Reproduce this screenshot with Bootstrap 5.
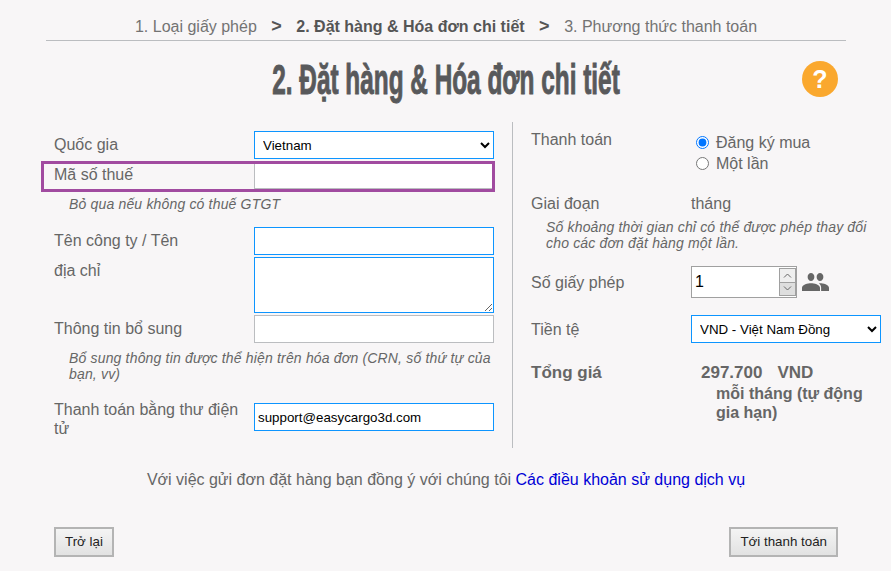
<!DOCTYPE html>
<html lang="vi">
<head>
<meta charset="utf-8">
<title>Đặt hàng</title>
<link href="https://cdn.jsdelivr.net/npm/bootstrap@5.3.0/dist/css/bootstrap.min.css" rel="stylesheet">
<style>
html,body{height:100%;}
body{background:#f8f6f7;font-family:"Liberation Sans",Arial,sans-serif;color:#666;font-size:16px;overflow:hidden;}
.shell{width:800px;margin-left:46px;height:571px;}
.stepbar{height:41px;border-bottom:1px solid #bbbdc0;padding-top:17px;line-height:19px;font-size:16px;color:#737373;justify-content:center;}
.stepbar b{color:#555;}
.sep{font-weight:700;font-size:18px;line-height:18px;color:#555;margin:0 14.5px;}
.headline{height:78px;position:relative;}
.headtext{font-size:42px;font-weight:700;color:#58595b;line-height:78px;white-space:nowrap;display:block;transform:scaleX(.58);transform-origin:center;text-align:center;-webkit-text-stroke:1px #58595b;}
.helpdot{position:absolute;left:756px;top:20px;width:36px;height:36px;border-radius:50%;background:#faa82e;color:#fff;font-weight:700;font-size:25px;line-height:36px;text-align:center;}
.panes{height:326px;margin-top:3px;}
.leftpane{width:467px;border-right:1px solid #bbbdc0;padding:9px 18px 0 8px;flex:none;}
.rightpane{padding:0 0 0 18px;flex:1;}
.frow{display:flex;}
.flabel{width:200px;flex:none;line-height:20px;padding-top:4px;}
.ffield{width:240px;height:28px;border:1px solid #0d95ff;background:#fff;border-radius:0;padding:0 3px;font-size:13.333px;color:#000;font-family:inherit;outline:none;display:block;}
select.ffield{padding:0 4px;}
.plain{border-color:#bbbdc0;}
.taxbox{border:3px solid #a14ba0;margin:2px -1px 0 -13px;height:31px;padding-left:10px;}
.taxbox .flabel{padding-top:0;line-height:21px;}
.taxbox .ffield{height:25px;border-color:#bbbdc0;border-right:0;border-top:0;width:238px;}
.hint{font-style:italic;font-size:14px;line-height:16px;color:#666;padding-left:15px;letter-spacing:.17px;}
.gap4{margin-top:4px;}
.gap15{margin-top:15px;}
.gap2{margin-top:2px;}
.gap7{margin-top:7px;}
.gap17{margin-top:17px;}
.gap18{margin-top:18px;}
.gap20{margin-top:20px;}
.gap5{margin-top:5px;}
.ratext{resize:vertical;height:56px;}
.mailrow .flabel{padding-top:0;line-height:19px;}
.mailrow .ffield{margin-top:3px;}
.rrow{display:flex;}
.rlabel{width:160px;flex:none;line-height:20px;}
.rvalue{line-height:20px;}
.firstrow{padding-top:8px;}
.radbox{margin-top:2px;padding-left:5px;}
.radline{line-height:21px;display:flex;align-items:center;}
.radline input{width:13px;height:13px;margin:0 7px 0 0;flex:none;}
.numcap{padding-top:2px;}
.numwrap{width:106px;height:32px;border:1px solid #a0a0a0;background:#fff;position:relative;flex:none;}
.numwrap input{border:0;width:86px;height:30px;padding:0 3px;font-size:16px;color:#000;outline:none;background:transparent;font-family:inherit;}
.spin{position:absolute;right:0;top:1px;width:17px;height:28px;display:flex;flex-direction:column;border:1px solid #a0a0a0;}
.spin span{flex:1;background:#efefef;display:flex;align-items:center;justify-content:center;}
.spin span+span{border-top:1px solid #a0a0a0;background:#dedede;}
.peopleicon{margin-left:5px;}
.curr{width:190px;height:28px;border:1px solid #0d95ff;background:#fff;font-size:13.333px;color:#000;padding:0 4px;font-family:inherit;outline:none;}
.tiencap{padding-top:5px;}
.total{font-size:17px;font-weight:700;color:#666;line-height:20px;}
.totalval{padding-left:10px;}
.vnd{margin-left:15px;}
.permonth{font-size:16px;line-height:19px;padding-left:15px;margin-top:1px;width:175px;}
.terms{text-align:center;line-height:20px;margin-top:22px;color:#666;}
.terms a{color:#0000d6;text-decoration:none;}
.foot{margin:37px 8px 0;}
.navbtn{border:2px solid #b4b4b4;border-radius:0;background:linear-gradient(#f4f4f4,#e2e2e2);color:#222;font-size:13.333px;height:30px;padding:0 9px;line-height:26px;}
</style>
</head>
<body>
<div class="shell">
  <div class="stepbar d-flex">
    <span>1. Loại giấy phép</span><span class="sep">&gt;</span><b>2. Đặt hàng &amp; Hóa đơn chi tiết</b><span class="sep">&gt;</span><span>3. Phương thức thanh toán</span>
  </div>
  <div class="headline">
    <span class="headtext">2. Đặt hàng &amp; Hóa đơn chi tiết</span>
    <div class="helpdot">?</div>
  </div>
  <div class="panes d-flex">
    <div class="leftpane">
      <div class="frow"><div class="flabel">Quốc gia</div><select class="ffield"><option>Vietnam</option></select></div>
      <div class="frow taxbox"><div class="flabel">Mã số thuế</div><input class="ffield" type="text"></div>
      <div class="hint gap4">Bỏ qua nếu không có thuế GTGT</div>
      <div class="frow gap15"><div class="flabel">Tên công ty / Tên</div><input class="ffield" type="text"></div>
      <div class="frow gap2"><div class="flabel">địa chỉ</div><textarea class="ffield ratext"></textarea></div>
      <div class="frow gap2"><div class="flabel">Thông tin bổ sung</div><input class="ffield plain" type="text"></div>
      <div class="hint gap7">Bổ sung thông tin được thể hiện trên hóa đơn (CRN, số thứ tự của bạn, vv)</div>
      <div class="frow gap18 mailrow"><div class="flabel">Thanh toán bằng thư điện tử</div><input class="ffield" type="text" value="support@easycargo3d.com"></div>
    </div>
    <div class="rightpane">
      <div class="rrow firstrow"><div class="rlabel">Thanh toán</div>
        <div class="radbox">
          <label class="radline"><input type="radio" name="pay" checked>Đăng ký mua</label>
          <label class="radline"><input type="radio" name="pay">Một lần</label>
        </div>
      </div>
      <div class="rrow gap20"><div class="rlabel">Giai đoạn</div><div class="rvalue">tháng</div></div>
      <div class="hint gap5">Số khoảng thời gian chỉ có thể được phép thay đổi cho các đơn đặt hàng một lần.</div>
      <div class="rrow align-items-center gap15"><div class="rlabel numcap">Số giấy phép</div>
        <div class="numwrap"><input type="text" value="1"><div class="spin"><span><svg width="9" height="5" viewBox="0 0 9 5"><path d="M1 4.500 4.500 1 8 4.500" fill="none" stroke="#666"/></svg></span><span><svg width="9" height="5" viewBox="0 0 9 5"><path d="M1 .5 4.500 4 8 .5" fill="none" stroke="#666"/></svg></span></div></div>
        <svg class="peopleicon" width="27" height="18" viewBox="0 0 24 16"><path fill="#666" d="M16 7c1.700 0 3-1.500 3-3.500S17.700 0 16 0s-3 1.500-3 3.500S14.300 7 16 7zM8 7c1.700 0 3-1.500 3-3.500S9.700 0 8 0 5 1.500 5 3.500 6.300 7 8 7zm0 2c-2.700 0-8 1.300-8 4v3h16v-3c0-2.700-5.300-4-8-4zm8 0h-1c1.300 1 2 2.300 2 4v3h7v-3c0-2.700-5.300-4-8-4z"/></svg>
      </div>
      <div class="rrow gap17"><div class="rlabel tiencap">Tiền tệ</div><select class="curr"><option>VND - Việt Nam Đồng</option></select></div>
      <div class="rrow gap20"><div class="rlabel total">Tổng giá</div><div class="total totalval">297.700<span class="vnd">VND</span><div class="permonth">mỗi tháng (tự động gia hạn)</div></div></div>
    </div>
  </div>
  <div class="terms">Với việc gửi đơn đặt hàng bạn đồng ý với chúng tôi <a href="#">Các điều khoản sử dụng dịch vụ</a></div>
  <div class="foot d-flex justify-content-between">
    <button class="navbtn" type="button">Trở lại</button>
    <button class="navbtn" type="button">Tới thanh toán</button>
  </div>
</div>
<script src="https://cdn.jsdelivr.net/npm/bootstrap@5.3.0/dist/js/bootstrap.bundle.min.js"></script>
</body>
</html>
